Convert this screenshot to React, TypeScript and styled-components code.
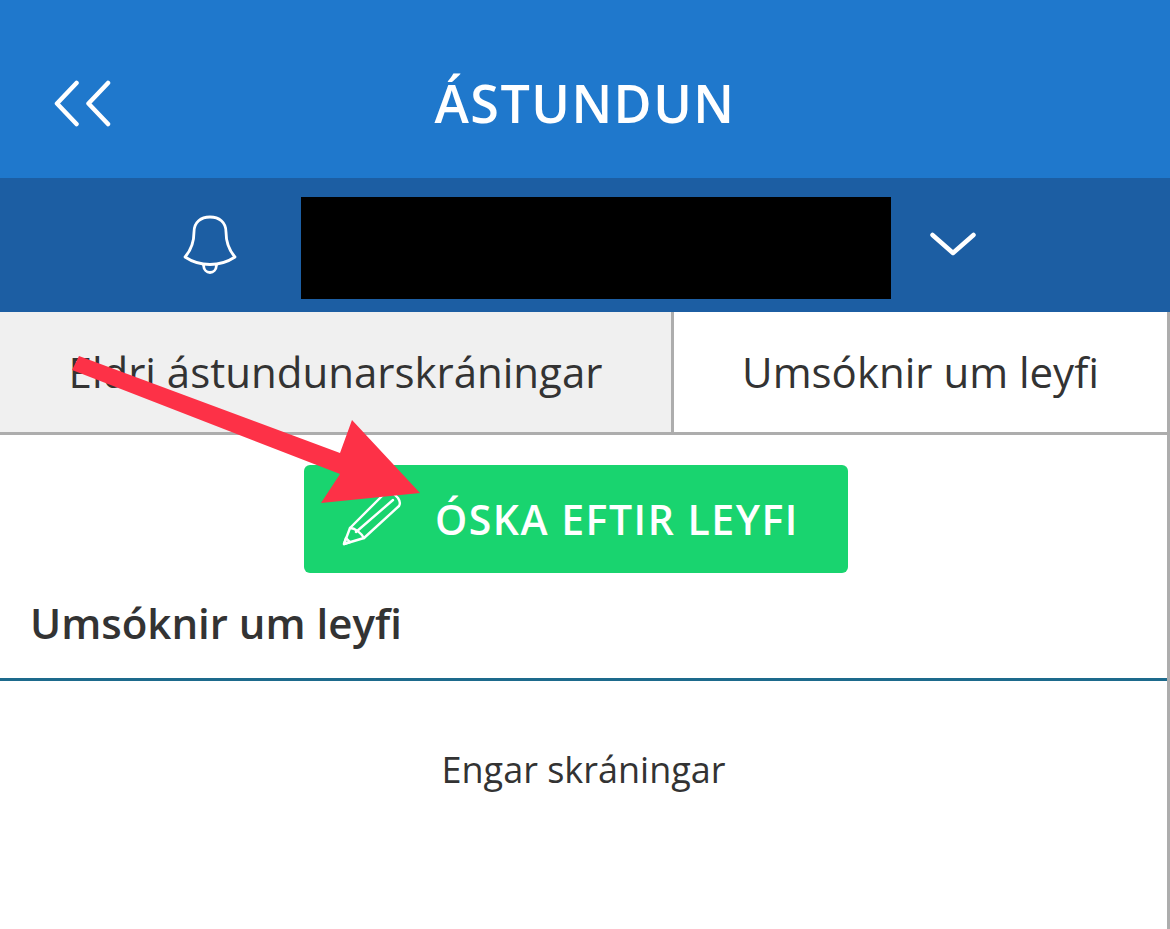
import { createGlobalStyle, styled } from "styled-components";

const GlobalStyle = createGlobalStyle`
  html, body {
    margin: 0;
    padding: 0;
    background: #fff;
  }
  body {
    font-family: "Open Sans", "Liberation Sans", sans-serif;
    color: #333;
  }
`;

const Page = styled.div`
  position: relative;
  width: 1170px;
  height: 929px;
  overflow: hidden;
`;

const Header = styled.header`
  box-sizing: border-box;
  height: 178px;
  background: #1f78cc;
  display: grid;
  grid-template-columns: 1fr auto 1fr;
  align-items: center;
  padding: 28px 0 0 54px;
`;

const BackIcon = styled.svg`
  width: 58px;
  height: 48px;
`;

const Title = styled.h1`
  margin: 0 0 0 -54px;
  font-size: 52px;
  font-weight: 600;
  color: #fff;
  letter-spacing: 1.5px;
  line-height: 68px;
`;

const StudentBar = styled.div`
  height: 134px;
  background: #1c5ea3;
  display: flex;
  align-items: center;
  padding-left: 183px;
`;

const BellIcon = styled.svg`
  width: 54px;
  height: 60px;
  margin-right: 64px;
`;

const Redacted = styled.div`
  width: 590px;
  height: 102px;
  background: #000;
  margin: 6px 39px 0 0;
`;

const ChevronIcon = styled.svg`
  width: 46px;
  height: 26px;
`;

const Content = styled.main`
  border-right: 3px solid #adadad;
  height: 617px;
`;

const Tabs = styled.div`
  display: grid;
  grid-template-columns: 671px 1fr;
  height: 120px;
  border-bottom: 3px solid #adadad;
`;

const Tab = styled.div<{ $active?: boolean }>`
  display: flex;
  align-items: center;
  justify-content: center;
  font-size: 42px;
  padding-bottom: 1px;
  background: ${(p) => (p.$active ? "#fff" : "#f0f0f0")};
  border-left: ${(p) => (p.$active ? "3px solid #adadad" : "0")};
`;

const ButtonRow = styled.div`
  display: flex;
  justify-content: center;
  padding: 30px 15px 0 0;
`;

const RequestButton = styled.button`
  width: 544px;
  height: 108px;
  display: flex;
  align-items: center;
  gap: 30px;
  padding: 0 0 0 37px;
  border: 0;
  border-radius: 6px;
  background: #19d46f;
  color: #fff;
  font-family: inherit;
  font-size: 41px;
  font-weight: 600;
  letter-spacing: 1.5px;
`;

const PencilIcon = styled.svg`
  width: 64px;
  height: 56px;
  flex: none;
`;

const SectionTitle = styled.h2`
  margin: 0;
  padding: 24px 0 29px 30px;
  font-size: 42px;
  font-weight: 600;
  line-height: 52px;
  border-bottom: 3px solid #1d6a8c;
`;

const EmptyText = styled.p`
  margin: 0;
  padding-top: 64px;
  text-align: center;
  font-size: 36px;
  line-height: 50px;
`;

const ArrowOverlay = styled.svg`
  position: absolute;
  left: 0;
  top: 0;
  width: 1170px;
  height: 929px;
  pointer-events: none;
`;

export default function App() {
  return (
    <Page>
      <GlobalStyle />
      <Header>
        <BackIcon viewBox="0 0 58 48" fill="none" stroke="#fff" strokeWidth="4.5" strokeLinecap="round" strokeLinejoin="round">
          <path d="M22.500 4 L3 24.500 L22.500 45" />
          <path d="M54 4 L34.500 24.500 L54 45" />
        </BackIcon>
        <Title>ÁSTUNDUN</Title>
      </Header>
      <StudentBar>
        <BellIcon viewBox="0 0 54 60" fill="none" stroke="#fff" strokeWidth="2.800" strokeLinecap="round" strokeLinejoin="round">
          <path d="M2 42 C9 34 11 26 11 17 C11 7 18 2 27 2 C36 2 43 7 43 17 C43 26 45 34 52 42 C37 52 17 52 2 42 Z" />
          <path d="M20.500 50 C21 60 33 60 33.500 50" />
        </BellIcon>
        <Redacted />
        <ChevronIcon viewBox="0 0 46 26" fill="none" stroke="#fff" strokeWidth="4.500" strokeLinecap="round" strokeLinejoin="round">
          <path d="M2.500 3 L23 21 L43.500 3" />
        </ChevronIcon>
      </StudentBar>
      <Content>
        <Tabs>
          <Tab>Eldri ástundunarskráningar</Tab>
          <Tab $active>Umsóknir um leyfi</Tab>
        </Tabs>
        <ButtonRow>
          <RequestButton>
            <PencilIcon viewBox="0 0 64 56" fill="none" stroke="#fff" strokeWidth="2.400" strokeLinecap="round" strokeLinejoin="round">
              <path d="M3 53 L9 37 L44 2 C47 0 51 1 53 3 L57 7 C59 10 60 12 58 15 L23 47 Z" />
              <path d="M9 37 C14 37 20 42 23 47" />
              <path d="M15 41 L52 9" />
              <path d="M3 53 L5 47 L9 51 Z" />
            </PencilIcon>
            ÓSKA EFTIR LEYFI
          </RequestButton>
        </ButtonRow>
        <SectionTitle>Umsóknir um leyfi</SectionTitle>
        <EmptyText>Engar skráningar</EmptyText>
      </Content>
      <ArrowOverlay viewBox="0 0 1170 929">
        <path
          fill="#fd3147"
          d="M79 356 L72 370 L340 474 L321 503 L420 493 L352 420 L340 453 Z"
        />
      </ArrowOverlay>
    </Page>
  );
}
